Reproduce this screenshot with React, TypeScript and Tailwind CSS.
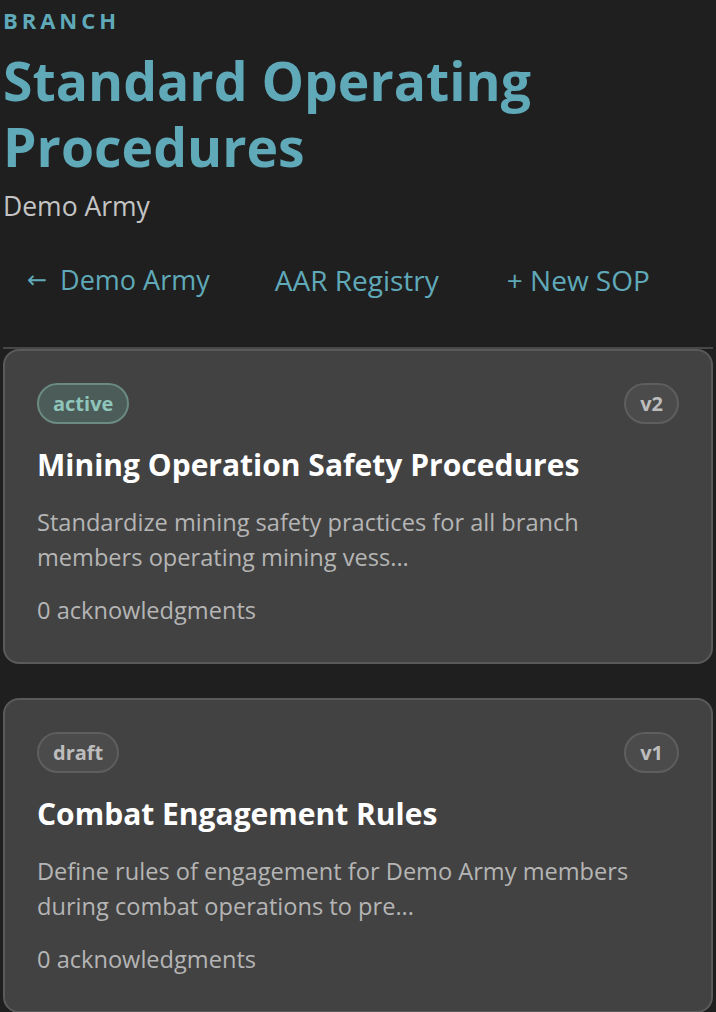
const sops = [
  {
    id: 1,
    status: "active",
    version: "v2",
    title: "Mining Operation Safety Procedures",
    summary: "Standardize mining safety practices for all branch members operating mining vess...",
    acks: 0,
  },
  {
    id: 2,
    status: "draft",
    version: "v1",
    title: "Combat Engagement Rules",
    summary: "Define rules of engagement for Demo Army members during combat operations to pre...",
    acks: 0,
  },
]

const pill = "rounded-full border-2 px-[14px] py-[5px] text-[20px] font-bold leading-[27px]"

export default function App() {
  return (
    <div
      className="min-h-screen bg-[#1f1f1f] px-[3px] pb-10"
      style={{ fontFamily: '"Open Sans", "Noto Sans", sans-serif' }}
    >
      <header className="pt-[6px]">
        <div className="text-[22px] font-bold uppercase leading-[28px] tracking-[0.18em] text-[#5fa9b9]">Branch</div>
        <h1 className="mt-[14px] text-[53.5px] font-bold leading-[66px] text-[#5fa9b9]">Standard Operating Procedures</h1>
        <p className="mt-[9px] text-[26.5px] leading-[34px] text-[#c4c4c4]">Demo Army</p>
      </header>

      {/* top links */}
      <nav className="mt-[39px] flex items-center pb-[49px] pl-[24px] text-[28px] leading-[36px] text-[#5fa9b9]">
        <a className="flex items-center">
          <span className="mr-[13px] font-['DejaVu_Sans'] text-[24px]">←</span>
          <span className="text-[27px]">Demo Army</span>
        </a>
        <a className="ml-[65px]">AAR Registry</a>
        <a className="ml-[68px]">+ New SOP</a>
      </nav>

      <div className="border-t-2 border-[#474747]">
        <div className="flex flex-col gap-[34px]">
          {sops.map((sop) => (
            <div key={sop.id} className="rounded-[16px] border-2 border-[#5a5a5a] bg-[#424242] px-[32px] pb-[34px] pt-[32px]">
              <div className="flex items-center justify-between">
                <span
                  className={
                    sop.status === "active"
                      ? `${pill} border-[#6a8a82] bg-[#4c5c58] text-[#8fc5bb]`
                      : `${pill} border-[#5e5e5e] bg-[#4b4b4b] text-[#bdbdbd]`
                  }
                >
                  {sop.status}
                </span>
                <span className={`${pill} border-[#5e5e5e] bg-[#4b4b4b] text-[#bdbdbd]`}>{sop.version}</span>
              </div>
              <h2 className="mt-[21px] text-[30px] font-bold leading-[40px] text-white">{sop.title}</h2>
              <p className="mt-[20px] text-[23.6px] leading-[35px] text-[#b5b5b5]">{sop.summary}</p>
              <p className="mt-[18px] text-[23.6px] leading-[35px] text-[#b5b5b5]">{sop.acks} acknowledgments</p>
            </div>
          ))}
        </div>
      </div>
    </div>
  )
}
